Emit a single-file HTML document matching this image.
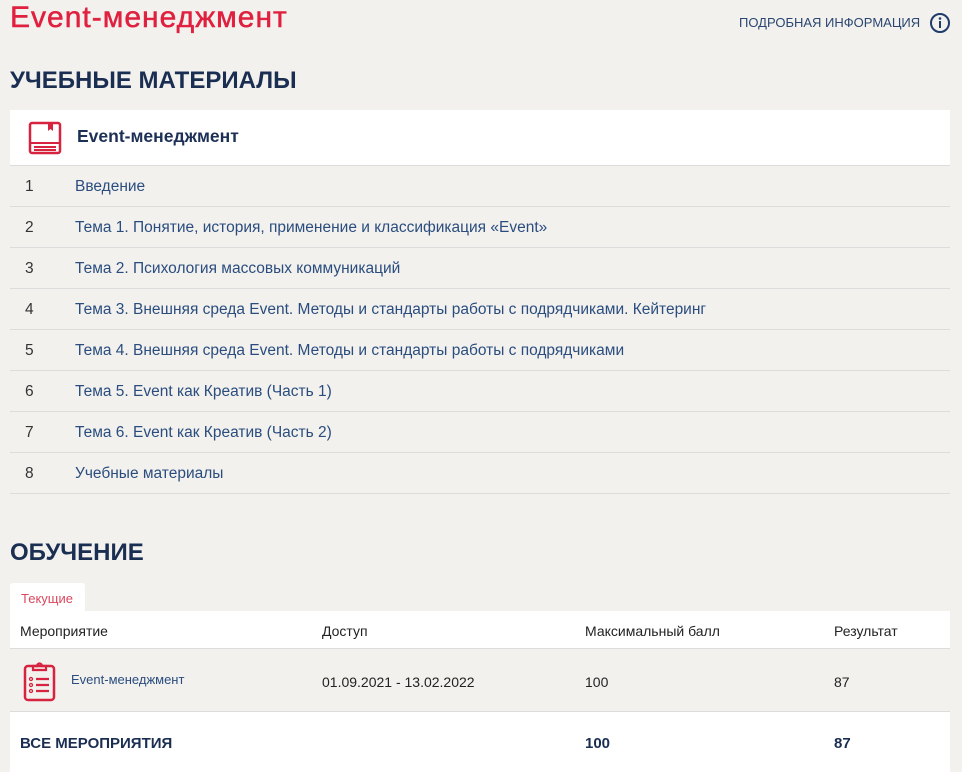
<!DOCTYPE html>
<html><head><meta charset="utf-8"><style>
*{margin:0;padding:0;box-sizing:border-box}
body{width:962px;height:772px;background:#f2f1ee;font-family:"Liberation Sans","DejaVu Sans",sans-serif;position:relative;overflow:hidden;color:#1c2f55}
.a{position:absolute;white-space:nowrap}
.title{left:10px;top:1px;font-size:30px;letter-spacing:1px;color:#e0203f;-webkit-text-stroke:0.5px #e0203f}
.info{left:739px;top:15px;font-size:13px;color:#2b4670}
.h{left:10px;font-size:24px;font-weight:bold;color:#1a2e52}
.box{position:absolute;left:10px;width:940px;background:#fff}
.row{position:absolute;left:10px;width:940px;height:41px;border-bottom:1px solid #dcdcdc;font-size:15.5px}
.row span{position:absolute;top:12px}
.n{left:15px;color:#333}
.t{left:65px;color:#2a4d7e}
.th{font-size:14px;color:#222}
</style></head><body>
<div class="a title">Event-менеджмент</div>
<div class="a info">ПОДРОБНАЯ ИНФОРМАЦИЯ</div>
<svg class="a" style="left:929px;top:12px" width="22" height="22" viewBox="0 0 22 22"><circle cx="11" cy="11" r="9" fill="none" stroke="#1f3b6a" stroke-width="2"/><rect x="10" y="9" width="2" height="7" fill="#1f3b6a"/><circle cx="11" cy="6.5" r="1.3" fill="#1f3b6a"/></svg>
<div class="a h" style="top:67px">УЧЕБНЫЕ МАТЕРИАЛЫ</div>
<div class="box" style="top:110px;height:56px;border-bottom:1px solid #dcdcdc"></div>
<svg class="a" style="left:28px;top:121px" width="34" height="34" viewBox="0 0 34 34"><rect x="2" y="2" width="30" height="30" rx="2" fill="none" stroke="#d6233f" stroke-width="2.5"/><path d="M2 22H32M6 26H28M6 29H28" stroke="#d6233f" stroke-width="2"/><path d="M20 2V10L22.5 8L25 10V2" fill="#d6233f"/></svg>
<div class="a" style="left:77px;top:126px;font-size:17.5px;font-weight:bold;color:#1c2f55">Event-менеджмент</div>
<div class="row" style="top:166px"><span class="n">1</span><span class="t">Введение</span></div>
<div class="row" style="top:207px"><span class="n">2</span><span class="t">Тема 1. Понятие, история, применение и классификация «Event»</span></div>
<div class="row" style="top:248px"><span class="n">3</span><span class="t">Тема 2. Психология массовых коммуникаций</span></div>
<div class="row" style="top:289px"><span class="n">4</span><span class="t">Тема 3. Внешняя среда Event. Методы и стандарты работы с подрядчиками. Кейтеринг</span></div>
<div class="row" style="top:330px"><span class="n">5</span><span class="t">Тема 4. Внешняя среда Event. Методы и стандарты работы с подрядчиками</span></div>
<div class="row" style="top:371px"><span class="n">6</span><span class="t">Тема 5. Event как Креатив (Часть 1)</span></div>
<div class="row" style="top:412px"><span class="n">7</span><span class="t">Тема 6. Event как Креатив (Часть 2)</span></div>
<div class="row" style="top:453px"><span class="n">8</span><span class="t">Учебные материалы</span></div>
<div class="a h" style="top:539px">ОБУЧЕНИЕ</div>
<div class="box" style="top:583px;width:75px;height:30px;border-radius:3px 3px 0 0"></div>
<div class="a" style="left:21px;top:591px;font-size:13px;color:#d9485f">Текущие</div>
<div class="box" style="top:611px;height:38px;border-bottom:1px solid #dcdcdc"></div>
<div class="a th" style="left:20px;top:623px">Мероприятие</div>
<div class="a th" style="left:322px;top:623px">Доступ</div>
<div class="a th" style="left:585px;top:623px">Максимальный балл</div>
<div class="a th" style="left:834px;top:623px">Результат</div>
<div class="a" style="left:10px;top:711px;width:940px;border-top:1px solid #dcdcdc"></div>
<svg class="a" style="left:23px;top:660px" width="34" height="42" viewBox="0 0 34 42"><rect x="2" y="6" width="29" height="34" rx="3" fill="none" stroke="#d6233f" stroke-width="2.5"/><path d="M10 6V10H23V6H19A2.5 2.5 0 0 0 14 6Z" fill="none" stroke="#d6233f" stroke-width="2.2"/><circle cx="8" cy="19" r="1.5" fill="none" stroke="#d6233f" stroke-width="1.3"/><circle cx="8" cy="25" r="1.5" fill="none" stroke="#d6233f" stroke-width="1.3"/><circle cx="8" cy="31" r="1.5" fill="none" stroke="#d6233f" stroke-width="1.3"/><path d="M13 19H26M13 25H26M13 31H26" stroke="#d6233f" stroke-width="2.2"/></svg>
<div class="a" style="left:71px;top:672px;font-size:13px;color:#2a4d7e">Event-менеджмент</div>
<div class="a" style="left:322px;top:674px;font-size:14px;color:#222">01.09.2021 - 13.02.2022</div>
<div class="a" style="left:585px;top:674px;font-size:14px;color:#222">100</div>
<div class="a" style="left:834px;top:674px;font-size:14px;color:#222">87</div>
<div class="box" style="top:712px;height:60px"></div>
<div class="a" style="left:20px;top:735px;font-size:15px;font-weight:bold;color:#1a2e52">ВСЕ МЕРОПРИЯТИЯ</div>
<div class="a" style="left:585px;top:735px;font-size:15px;font-weight:bold;color:#1a2e52">100</div>
<div class="a" style="left:834px;top:735px;font-size:15px;font-weight:bold;color:#1a2e52">87</div>
</body></html>
